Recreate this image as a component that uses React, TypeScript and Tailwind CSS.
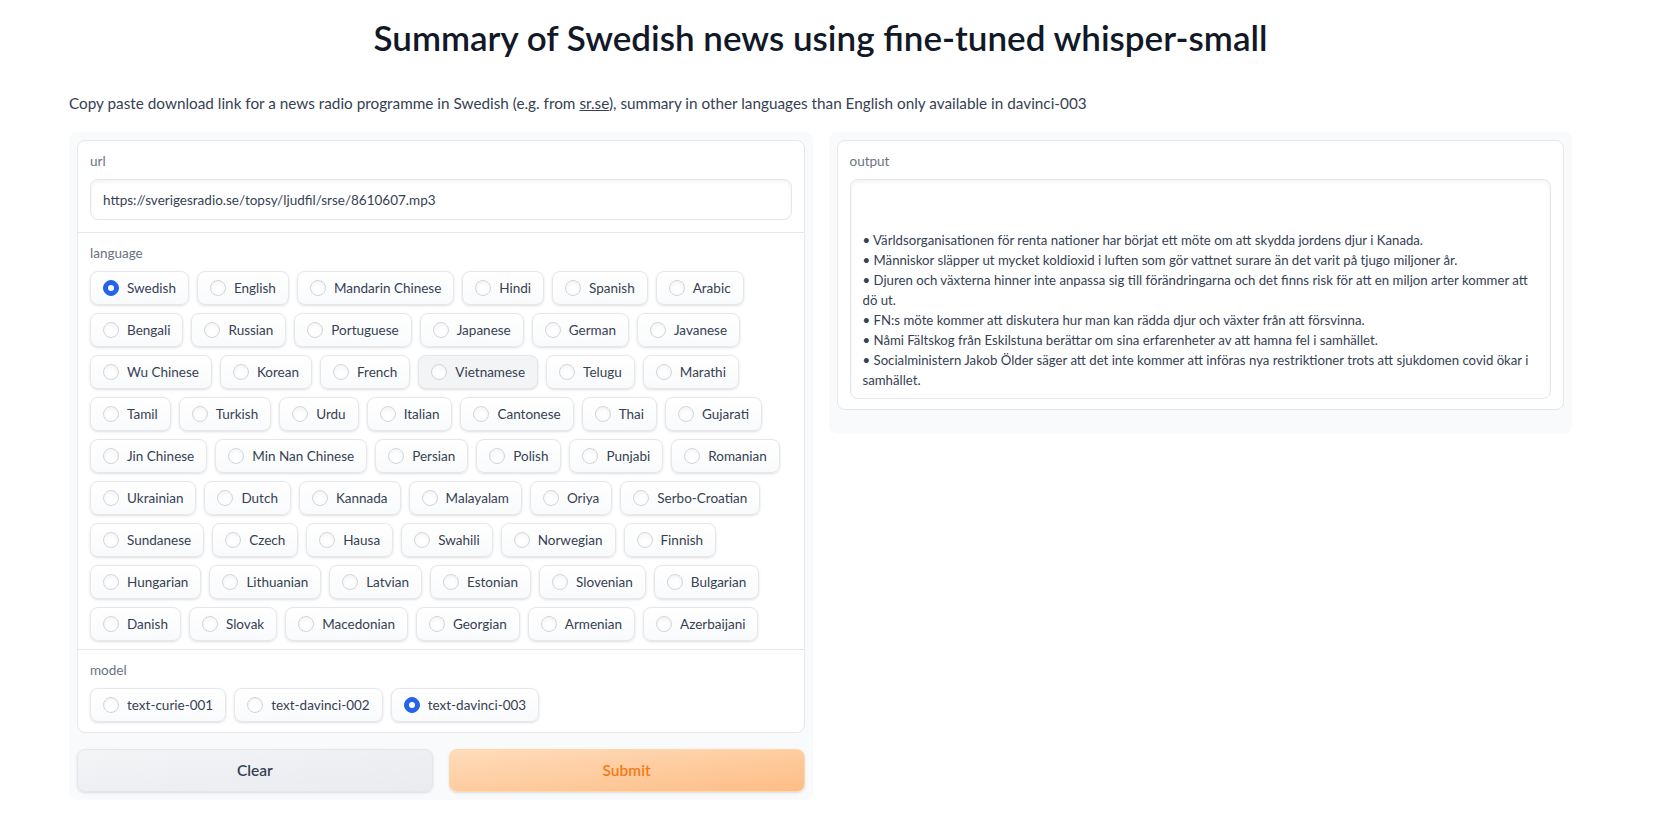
import { useState } from "react";

const languageRows = [
  ["Swedish", "English", "Mandarin Chinese", "Hindi", "Spanish", "Arabic"],
  ["Bengali", "Russian", "Portuguese", "Japanese", "German", "Javanese"],
  ["Wu Chinese", "Korean", "French", "Vietnamese", "Telugu", "Marathi"],
  ["Tamil", "Turkish", "Urdu", "Italian", "Cantonese", "Thai", "Gujarati"],
  ["Jin Chinese", "Min Nan Chinese", "Persian", "Polish", "Punjabi", "Romanian"],
  ["Ukrainian", "Dutch", "Kannada", "Malayalam", "Oriya", "Serbo-Croatian"],
  ["Sundanese", "Czech", "Hausa", "Swahili", "Norwegian", "Finnish"],
  ["Hungarian", "Lithuanian", "Latvian", "Estonian", "Slovenian", "Bulgarian"],
  ["Danish", "Slovak", "Macedonian", "Georgian", "Armenian", "Azerbaijani"],
];

const models = ["text-curie-001", "text-davinci-002", "text-davinci-003"];

const summary = `

• Världsorganisationen för renta nationer har börjat ett möte om att skydda jordens djur i Kanada.
• Människor släpper ut mycket koldioxid i luften som gör vattnet surare än det varit på tjugo miljoner år.
• Djuren och växterna hinner inte anpassa sig till förändringarna och det finns risk för att en miljon arter kommer att
dö ut.
• FN:s möte kommer att diskutera hur man kan rädda djur och växter från att försvinna.
• Nåmi Fältskog från Eskilstuna berättar om sina erfarenheter av att hamna fel i samhället.
• Socialministern Jakob Ölder säger att det inte kommer att införas nya restriktioner trots att sjukdomen covid ökar i
samhället.`;

function RadioItem({
  label,
  checked,
  hovered,
  onSelect,
}: {
  label: string;
  checked: boolean;
  hovered?: boolean;
  onSelect: () => void;
}) {
  return (
    <label
      onClick={onSelect}
      className={`flex h-[34px] cursor-pointer items-center gap-2 rounded-lg border border-gray-200 px-3 shadow-sm ${
        hovered ? "bg-gray-100" : "bg-gradient-to-t from-gray-50 to-white"
      }`}
    >
      <span
        className={`flex h-4 w-4 shrink-0 items-center justify-center rounded-full border ${
          checked ? "border-[#2563eb] bg-[#2563eb]" : "border-gray-300 bg-white shadow-inner"
        }`}
      >
        {checked && <span className="h-[6px] w-[6px] rounded-full bg-white" />}
      </span>
      <span className="whitespace-nowrap text-[13.5px] text-gray-700">{label}</span>
    </label>
  );
}

function FieldLabel({ children }: { children: string }) {
  return <div className="h-5 text-[13.5px] leading-5 text-gray-500">{children}</div>;
}

export default function App() {
  const [language, setLanguage] = useState("Swedish");
  const [model, setModel] = useState("text-davinci-003");
  const [url, setUrl] = useState("https://sverigesradio.se/topsy/ljudfil/srse/8610607.mp3");

  return (
    <div className="min-h-screen bg-white pl-[69px] pr-[97px] [font-family:Lato,sans-serif]">
      <h1 className="pt-[17px] text-center text-[35px] font-semibold leading-[40px] text-[#111827]">
        Summary of Swedish news using fine-tuned whisper-small
      </h1>
      <p className="mt-[34px] text-[15.3px] leading-6 text-gray-700">
        Copy paste download link for a news radio programme in Swedish (e.g. from{" "}
        <a className="underline">sr.se</a>), summary in other languages than English only available in
        davinci-003
      </p>

      <div className="mt-[17px] flex items-start gap-4">
        {/* inputs */}
        <div className="flex flex-1 flex-col gap-4 rounded-lg bg-gray-50 p-2">
          <div className="rounded-lg border border-gray-200 bg-white">
            <div className="flex flex-col gap-2 px-3 pt-[10px] pb-3">
              <FieldLabel>url</FieldLabel>
              <input
                value={url}
                onChange={(e) => setUrl(e.target.value)}
                className="h-[41px] rounded-lg border border-gray-200 px-3 text-[13.5px] text-gray-700 shadow-inner outline-none"
              />
            </div>
            <div className="flex flex-col gap-2 border-t border-gray-200 px-3 pt-[10px] pb-2">
              <FieldLabel>language</FieldLabel>
              <div className="flex flex-col gap-2">
                {languageRows.map((row, i) => (
                  <div key={i} className="flex gap-2">
                    {row.map((lang) => (
                      <RadioItem
                        key={lang}
                        label={lang}
                        checked={language === lang}
                        hovered={lang === "Vietnamese"}
                        onSelect={() => setLanguage(lang)}
                      />
                    ))}
                  </div>
                ))}
              </div>
            </div>
            <div className="flex flex-col gap-2 border-t border-gray-200 px-3 pt-[10px] pb-[10px]">
              <FieldLabel>model</FieldLabel>
              <div className="flex gap-2">
                {models.map((m) => (
                  <RadioItem key={m} label={m} checked={model === m} onSelect={() => setModel(m)} />
                ))}
              </div>
            </div>
          </div>

          <div className="flex gap-4">
            <button className="h-[43px] flex-1 rounded-lg border border-gray-200 bg-gradient-to-br from-gray-100 to-gray-200/80 text-[15.5px] font-semibold text-gray-700 shadow-sm">
              Clear
            </button>
            <button className="h-[43px] flex-1 rounded-lg border border-orange-200 bg-gradient-to-br from-[#fedcbb] to-[#fdbd85] text-[15.5px] font-semibold text-[#f57a14] shadow-sm">
              Submit
            </button>
          </div>
        </div>

        {/* output */}
        <div className="flex-1 rounded-lg bg-gray-50 p-2 pb-6">
          <div className="flex flex-col gap-2 rounded-lg border border-gray-200 bg-white px-3 pt-[10px] pb-[10px]">
            <FieldLabel>output</FieldLabel>
            <textarea
              readOnly
              rows={10}
              wrap="off"
              value={summary}
              className="resize-none overflow-hidden rounded-lg border border-gray-200 px-3 pt-[10px] pb-2 text-[13.2px] leading-5 text-gray-700 shadow-inner outline-none"
            />
          </div>
        </div>
      </div>
    </div>
  );
}
